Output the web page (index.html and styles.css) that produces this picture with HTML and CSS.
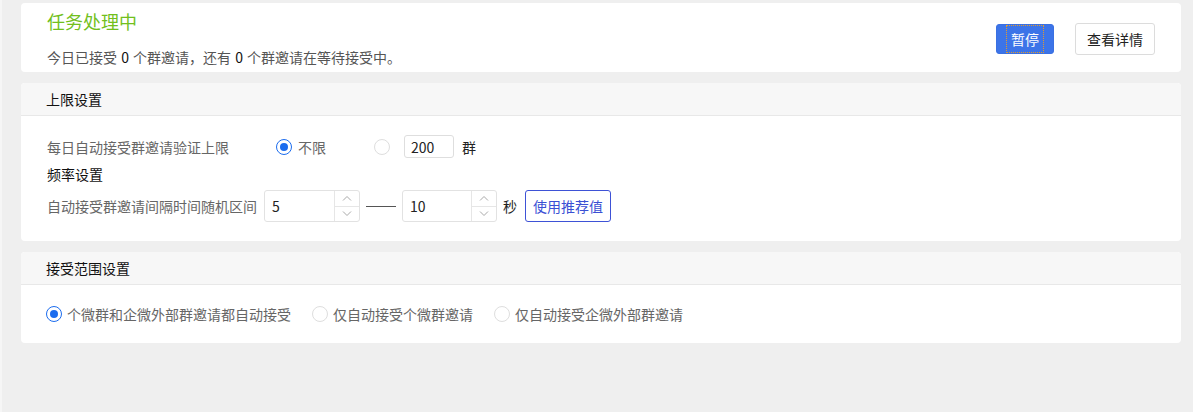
FILE: index.html
```html
<!DOCTYPE html>
<html lang="zh-CN">
<head>
  <meta charset="UTF-8" />
  <meta name="viewport" content="width=device-width, initial-scale=1.0"/>
  <title>任务处理中</title>
  <link rel="stylesheet" href="styles.css">
</head>
<body>
  <div class="page">
    <div class="card status-card">
      <div class="status-text">
        <div class="status-title">任务处理中</div>
        <div class="status-desc">今日已接受 <b>0</b> 个群邀请，还有 <b>0</b> 个群邀请在等待接受中。</div>
      </div>
      <div class="status-actions">
        <button class="btn btn-primary"><span class="focus-ring">暂停</span></button>
        <button class="btn btn-default">查看详情</button>
      </div>
    </div>

    <div class="card">
      <div class="card-header">上限设置</div>
      <div class="card-body limit-body">
        <div class="form-row row-limit">
          <span class="row-label label-limit">每日自动接受群邀请验证上限</span>
          <label class="radio checked"><span class="radio-dot"></span>不限</label>
          <label class="radio radio-custom"><span class="radio-dot"></span></label>
          <input class="text-input" value="200">
          <span class="unit">群</span>
        </div>
        <div class="sub-title">频率设置</div>
        <div class="form-row row-freq">
          <span class="row-label label-freq">自动接受群邀请间隔时间随机区间</span>
          <div class="num-input">
            <span class="num-value">5</span>
            <div class="num-spin">
              <span class="spin-btn"><svg width="10" height="6" viewBox="0 0 10 6"><path d="M1 5.5 L5 1.5 L9 5.5" fill="none" stroke="#a8a8a8" stroke-width="1"/></svg></span>
              <span class="spin-btn"><svg width="10" height="6" viewBox="0 0 10 6"><path d="M1 0.5 L5 4.5 L9 0.5" fill="none" stroke="#a8a8a8" stroke-width="1"/></svg></span>
            </div>
          </div>
          <span class="dash"></span>
          <div class="num-input">
            <span class="num-value">10</span>
            <div class="num-spin">
              <span class="spin-btn"><svg width="10" height="6" viewBox="0 0 10 6"><path d="M1 5.5 L5 1.5 L9 5.5" fill="none" stroke="#a8a8a8" stroke-width="1"/></svg></span>
              <span class="spin-btn"><svg width="10" height="6" viewBox="0 0 10 6"><path d="M1 0.5 L5 4.5 L9 0.5" fill="none" stroke="#a8a8a8" stroke-width="1"/></svg></span>
            </div>
          </div>
          <span class="unit unit-sec">秒</span>
          <button class="btn btn-outline">使用推荐值</button>
        </div>
      </div>
    </div>

    <div class="card">
      <div class="card-header">接受范围设置</div>
      <div class="card-body range-body">
        <label class="radio checked"><span class="radio-dot"></span>个微群和企微外部群邀请都自动接受</label>
        <label class="radio"><span class="radio-dot"></span>仅自动接受个微群邀请</label>
        <label class="radio"><span class="radio-dot"></span>仅自动接受企微外部群邀请</label>
      </div>
    </div>
  </div>
</body>
</html>
```

FILE: styles.css
```css
body {
  margin: 0;
  background-color: #efefef;
  font-family: "Noto Sans CJK SC", "Noto Sans", sans-serif;
  font-size: 14px;
  color: #333;
  border-left: 2px solid #f6f6f6;
  min-height: 412px;
  box-sizing: border-box;
}

.page {
  padding: 3px 12px 0 19px;
  display: flex;
  flex-direction: column;
  gap: 11px;
}

.card {
  background: #fff;
  border-radius: 4px;
  overflow: hidden;
}

.status-card {
  height: 69px;
  box-sizing: border-box;
  display: flex;
  justify-content: space-between;
  align-items: center;
  padding: 0 26px;
}

.status-text {
  align-self: flex-start;
  padding-top: 6px;
}

.status-title {
  color: #72bf1d;
  font-size: 18px;
  line-height: 24px;
}

.status-desc {
  margin-top: 14px;
  line-height: 20px;
  font-size: 14px;
  color: #555;
}

.status-desc b {
  font-weight: normal;
  color: #111;
  padding: 0 1px;
}

.status-actions {
  display: flex;
  align-items: center;
  gap: 21px;
  margin-top: 2px;
}

.btn {
  font-family: inherit;
  font-size: 14px;
  border-radius: 3px;
  cursor: pointer;
  padding: 0;
  box-sizing: border-box;
}

.btn-primary {
  width: 58px;
  height: 30px;
  border: 1px solid #3a70e2;
  background: #3c74e8;
  color: #fff;
  display: flex;
  align-items: center;
  justify-content: center;
}

.focus-ring {
  display: block;
  width: 38px;
  height: 28px;
  line-height: 28px;
  box-sizing: border-box;
  outline: 1px dotted #e39a2c;
  outline-offset: -1px;
}

.btn-default {
  width: 80px;
  height: 32px;
  border: 1px solid #dcdcdc;
  background: #fff;
  color: #222;
}

.card-header {
  height: 32px;
  line-height: 32px;
  background: #f7f7f7;
  border-bottom: 1px solid #e8e8e8;
  padding-left: 25px;
  color: #111;
  font-size: 14px;
}

.card-body {
  padding: 0 26px;
}

.limit-body {
  padding-top: 19px;
  padding-bottom: 19px;
  height: 125px;
  box-sizing: border-box;
}

.form-row {
  display: flex;
  align-items: center;
}

.row-limit {
  height: 23px;
}

.row-label {
  color: #666;
  flex-shrink: 0;
}

.label-limit {
  width: 229px;
}

.label-freq {
  width: 217px;
}

.sub-title {
  margin-top: 6px;
  line-height: 20px;
  color: #111;
}

.row-freq {
  margin-top: 6px;
  height: 32px;
}

.radio {
  display: flex;
  align-items: center;
  color: #666;
  gap: 6px;
}

.radio-dot {
  width: 16px;
  height: 16px;
  box-sizing: border-box;
  border: 1px solid #dedede;
  border-radius: 50%;
  background: #fff;
  display: flex;
  align-items: center;
  justify-content: center;
}

.radio.checked .radio-dot {
  border: 1.5px solid #1b6cee;
}

.radio.checked .radio-dot::after {
  content: "";
  width: 8px;
  height: 8px;
  border-radius: 50%;
  background: #1b6cee;
}

.radio-custom {
  margin-left: 48px;
}

.text-input {
  margin-left: 14px;
  width: 50px;
  height: 23px;
  box-sizing: border-box;
  border: 1px solid #dedede;
  border-radius: 3px;
  padding: 0 6px;
  font-family: inherit;
  font-size: 14px;
  color: #222;
}

.unit {
  margin-left: 8px;
  color: #222;
}

.unit-sec {
  margin-left: 6px;
}

.num-input {
  width: 96px;
  height: 32px;
  box-sizing: border-box;
  border: 1px solid #e2e2e2;
  border-radius: 3px;
  display: flex;
}

.num-input + .dash + .num-input {
  width: 95px;
}

.num-value {
  flex: 1;
  line-height: 30px;
  padding-left: 7px;
  color: #222;
}

.num-spin {
  width: 24px;
  border-left: 1px solid #e6e6e6;
  display: flex;
  flex-direction: column;
}

.spin-btn {
  flex: 1;
  display: flex;
  align-items: center;
  justify-content: center;
}

.spin-btn + .spin-btn {
  border-top: 1px solid #e6e6e6;
}

.dash {
  width: 30px;
  height: 1px;
  background: #555;
  margin: 0 6px 0 6px;
}

.btn-outline {
  margin-left: 8px;
  width: 86px;
  height: 32px;
  border: 1px solid #3e52d6;
  background: #fff;
  color: #3a50d4;
}

.range-body {
  height: 58px;
  display: flex;
  align-items: center;
  gap: 21px;
  padding-left: 25px;
}

.range-body .radio {
  gap: 5px;
}
```
